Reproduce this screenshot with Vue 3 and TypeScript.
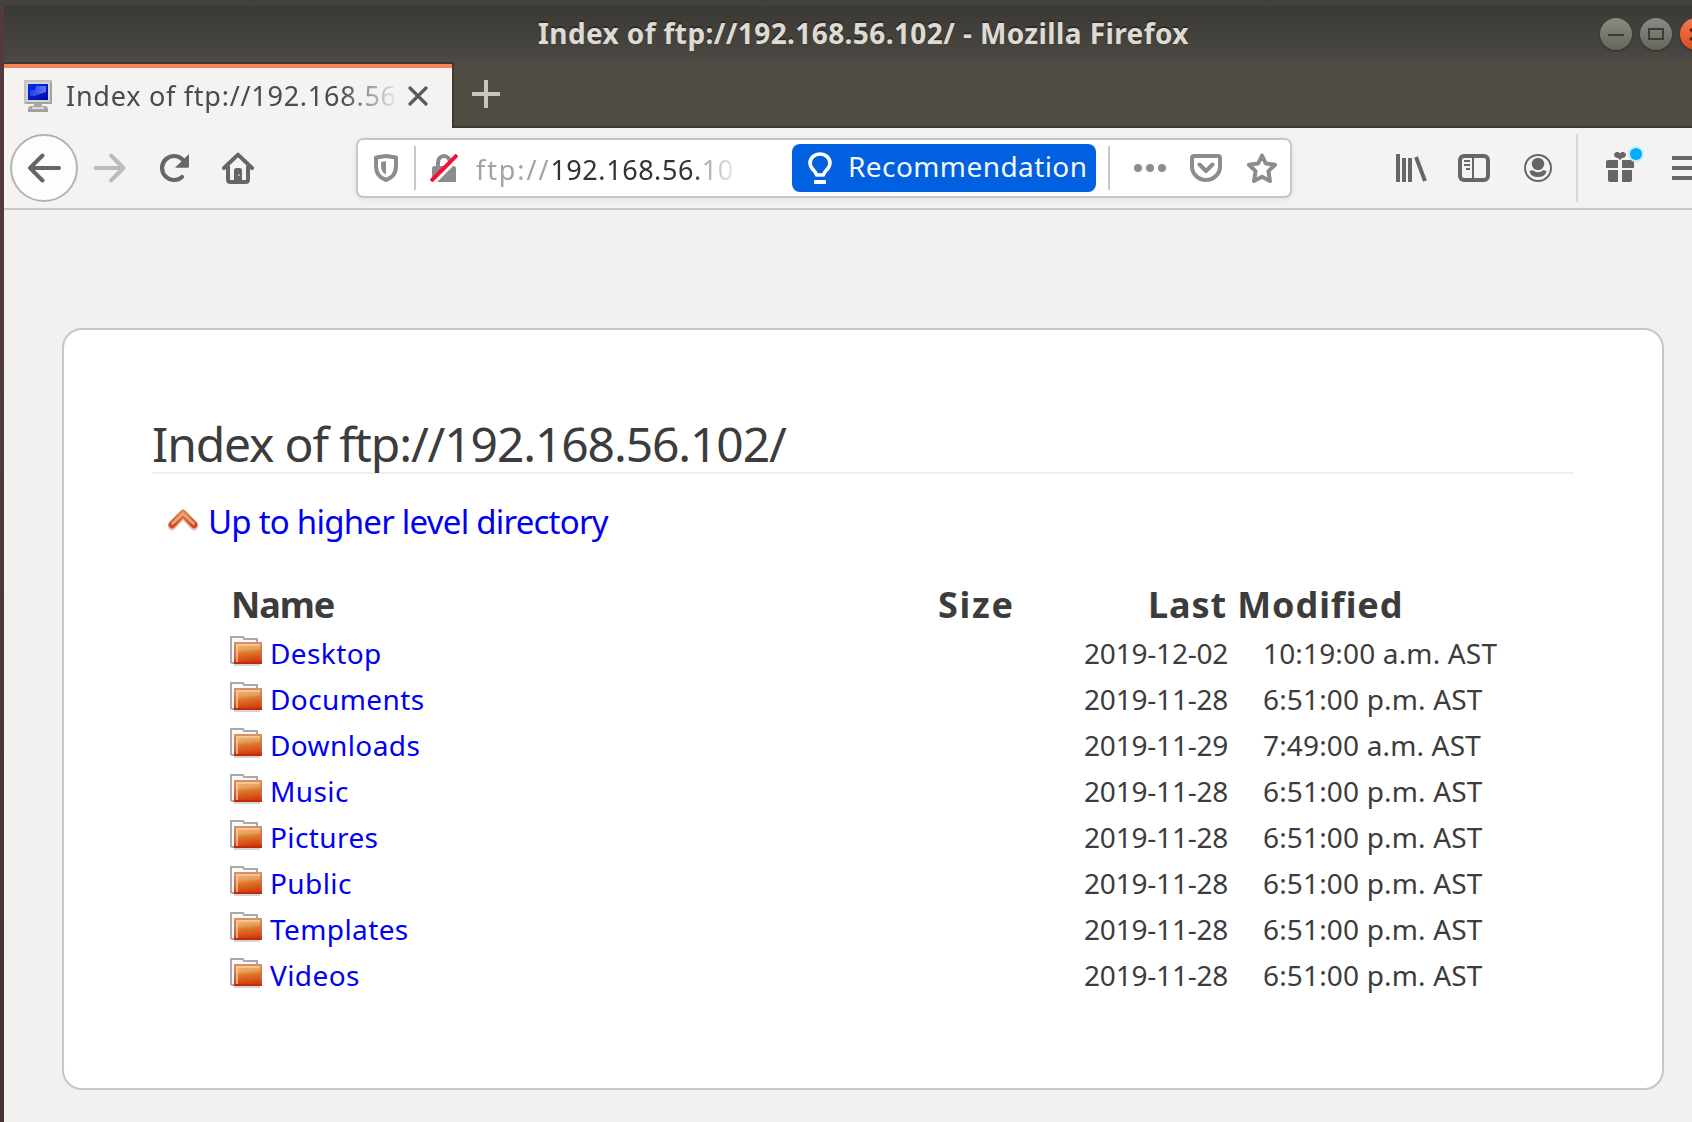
<script setup lang="ts">
interface Entry {
  name: string
  date: string
  time: string
}

const entries: Entry[] = [
  { name: 'Desktop', date: '2019-12-02', time: '10:19:00 a.m. AST' },
  { name: 'Documents', date: '2019-11-28', time: '6:51:00 p.m. AST' },
  { name: 'Downloads', date: '2019-11-29', time: '7:49:00 a.m. AST' },
  { name: 'Music', date: '2019-11-28', time: '6:51:00 p.m. AST' },
  { name: 'Pictures', date: '2019-11-28', time: '6:51:00 p.m. AST' },
  { name: 'Public', date: '2019-11-28', time: '6:51:00 p.m. AST' },
  { name: 'Templates', date: '2019-11-28', time: '6:51:00 p.m. AST' },
  { name: 'Videos', date: '2019-11-28', time: '6:51:00 p.m. AST' },
]
</script>

<template>
  <div class="screen">
    <svg class="defs" width="0" height="0" aria-hidden="true">
      <defs>
        <linearGradient id="folder" x1="0" y1="0" x2="0.15" y2="1">
          <stop offset="0" stop-color="#f0bd86" />
          <stop offset="0.4" stop-color="#e69c58" />
          <stop offset="0.52" stop-color="#de7c2c" />
          <stop offset="1" stop-color="#d23c10" />
        </linearGradient>
        <linearGradient id="folderEdge" x1="0" y1="0" x2="0" y2="1">
          <stop offset="0" stop-color="#dc8f64" />
          <stop offset="0.8" stop-color="#cc5a38" />
          <stop offset="1" stop-color="#bd2a0c" />
        </linearGradient>
        <linearGradient id="up" x1="0" y1="0" x2="0" y2="1">
          <stop offset="0" stop-color="#d88452" />
          <stop offset="1" stop-color="#cf4a20" />
        </linearGradient>
        <linearGradient id="crt" x1="0" y1="0" x2="1" y2="1">
          <stop offset="0" stop-color="#0a2af8" />
          <stop offset="1" stop-color="#0008a0" />
        </linearGradient>
        <linearGradient id="shine" x1="0" y1="0" x2="1" y2="0">
          <stop offset="0" stop-color="#2a4cf0" />
          <stop offset="1" stop-color="#8295fb" />
        </linearGradient>
      </defs>
    </svg>

    <div class="desktop-edge"></div>
    <div class="window">
      <header class="titlebar">
        <span class="title">Index of ftp://192.168.56.102/ - Mozilla Firefox</span>
        <div class="controls">
          <span class="ctl">
            <svg width="32" height="32" viewBox="0 0 32 32"><path d="M8 17h16" stroke="#3c3b37" stroke-width="2" /></svg>
          </span>
          <span class="ctl">
            <svg width="32" height="32" viewBox="0 0 32 32"><path d="M9 11h14v10H9z" fill="none" stroke="#3c3b37" stroke-width="2" /></svg>
          </span>
          <span class="ctl close">
            <svg width="32" height="32" viewBox="0 0 32 32"><path d="M10 11l12 11M22 11L10 22" stroke="#4a2418" stroke-width="2.6" /></svg>
          </span>
        </div>
      </header>

      <div class="tabstrip">
        <div class="tab">
          <svg class="favicon" width="28" height="32" viewBox="0 0 28 32">
            <path d="M0 0h28v24H0z" fill="#c3c3bf" />
            <path d="M2 2h26v22H2z" fill="#a3a39f" />
            <path d="M2 2h24v20H2z" fill="#d5d5d0" />
            <path d="M4 4h20v16H4z" fill="url(#crt)" />
            <path d="M12 6h10v6l-12 4H6v-6h5z" fill="url(#shine)" opacity="0.75" />
            <path d="M10 24h8v2h4l2 2v2h-20v-2l2-2h4z" fill="#a8a8a2" />
            <path d="M8 28h12" stroke="#d8d8d4" stroke-width="2" />
            <path d="M4 31h20" stroke="#a09f9a" stroke-width="2" />
          </svg>
          <span class="tab-label">Index of ftp://192.168.56</span>
          <svg class="tab-close" width="20" height="20" viewBox="0 0 20 20"><path d="M2 2l16 16M18 2L2 18" stroke="#5c5b59" stroke-width="3.2" stroke-linecap="round" /></svg>
        </div>
        <div class="newtab">
          <svg width="28" height="28" viewBox="0 0 28 28"><path d="M14 0v28M0 14h28" stroke="#c9c6bf" stroke-width="4" /></svg>
        </div>
      </div>

      <nav class="toolbar">
        <span class="back">
          <svg width="34" height="30" viewBox="0 0 34 30"><path d="M32 15H3M15.500 2.500L3 15l12.500 12.500" fill="none" stroke="#676664" stroke-width="4" stroke-linecap="round" stroke-linejoin="round" /></svg>
        </span>
        <svg class="forward" width="32" height="30" viewBox="0 0 32 30"><path d="M1 15h28M17 2.500L29.500 15 17 27.500" fill="none" stroke="#bdbcba" stroke-width="4" stroke-linecap="round" stroke-linejoin="round" /></svg>
        <svg class="reload" width="32" height="30" viewBox="0 0 32 30">
          <path d="M23 24A12 12 0 1 1 23.500 6.500" fill="none" stroke="#676664" stroke-width="4.200" stroke-linecap="round" />
          <path d="M30 1v12.200a1.500 1.500 0 0 1-1.500 1.500H16z" fill="#676664" />
        </svg>
        <svg class="home" width="32" height="32" viewBox="0 0 32 32">
          <path d="M2 16L16 2.600 30 16" fill="none" stroke="#676664" stroke-width="4" stroke-linecap="round" stroke-linejoin="round" />
          <path d="M6 14v13.500q0 2.500 2.500 2.500h15q2.500 0 2.500-2.500V14" fill="none" stroke="#676664" stroke-width="4" />
          <path d="M12 29V18.500q0-2.500 2.500-2.500h3q2.500 0 2.500 2.500V29z" fill="#676664" />
          <path d="M16 22h2v2h-2z" fill="#aaa9a7" />
        </svg>

        <div class="urlbar">
          <svg class="shield" width="24" height="28" viewBox="0 0 24 28">
            <path d="M12 2L22 3.500V12c0 7-4 12-10 14C6 24 2 19 2 12V3.500z" fill="none" stroke="#8c8c8b" stroke-width="4" stroke-linejoin="round" />
            <path d="M12 7v13.500C8.500 18.500 7 16 7 12V8z" fill="#8c8c8b" />
          </svg>
          <i class="sep"></i>
          <svg class="lock" width="28" height="28" viewBox="0 0 28 28">
            <path d="M8 14V8.500a6 6.500 0 0 1 12 0V14" fill="none" stroke="#8c8c8b" stroke-width="4" />
            <path d="M2 14.500q0-2.500 2.500-2.500h19q2.500 0 2.500 2.500V28H4.500Q2 28 2 25.500z" fill="#8c8c8b" />
            <path d="M3 30L31 2" stroke="#fff" stroke-width="3" />
            <path d="M1 27L27 1" stroke="#ff0a3c" stroke-width="3.800" />
          </svg>
          <span class="url"><span class="scheme">ftp://</span>192.168.56.<span class="rest">10</span></span>
          <span class="reco">
            <svg width="24" height="32" viewBox="0 0 24 32">
              <path d="M8.500 23c0-4-6.500-5.500-6.500-12a10 9 0 0 1 20 0c0 6.500-6.500 8-6.500 12z" fill="none" stroke="#fff" stroke-width="3.600" stroke-linejoin="round" />
              <path d="M6 30h12" stroke="#fff" stroke-width="4" />
            </svg>
            <span>Recommendation</span>
          </span>
          <i class="sep sep2"></i>
          <svg class="dots" width="32" height="8" viewBox="0 0 32 8"><g fill="#8c8c8b"><circle cx="4" cy="4" r="4" /><circle cx="16" cy="4" r="4" /><circle cx="28" cy="4" r="4" /></g></svg>
          <svg class="pocket" width="32" height="28" viewBox="0 0 32 28">
            <path d="M4 2h24q2 0 2 2v8.500a14 13.500 0 0 1-28 0V4q0-2 2-2z" fill="none" stroke="#8c8c8b" stroke-width="4" />
            <path d="M9.500 10.500L16 17l6.500-6.500" fill="none" stroke="#8c8c8b" stroke-width="4" stroke-linecap="round" stroke-linejoin="round" />
          </svg>
          <svg class="star" width="32" height="32" viewBox="0 0 32 32"><path d="M16 3.500l3.800 8 9.200 1.200-6.600 6.400 1.600 9.900-8-4.300-8 4.300 1.600-9.900L3 12.700l9.200-1.200z" fill="none" stroke="#8c8c8b" stroke-width="4" stroke-linejoin="round" /></svg>
        </div>

        <svg class="library" width="32" height="28" viewBox="0 0 32 28">
          <path d="M2 0v28M8 4v24M14 4v24" stroke="#676664" stroke-width="4" />
          <path d="M20 3l9 24" stroke="#676664" stroke-width="4" />
        </svg>
        <svg class="sidebar" width="32" height="28" viewBox="0 0 32 28">
          <rect x="2" y="2" width="28" height="24" rx="4" fill="none" stroke="#676664" stroke-width="4" />
          <path d="M15 3v22M6 7h6M6 11h6M8 15h4" stroke="#676664" stroke-width="2" />
        </svg>
        <svg class="account" width="28" height="28" viewBox="0 0 28 28">
          <circle cx="14" cy="14" r="13" fill="none" stroke="#676664" stroke-width="2" />
          <circle cx="14" cy="10" r="6.200" fill="#676664" />
          <path d="M5.500 17q3.500-1.500 4.500 0 4 2.500 8 0 1-1.500 4.500 0-1 6-8.500 6t-8.500-6z" fill="#676664" />
        </svg>
        <i class="tsep"></i>
        <span class="gift">
          <svg width="28" height="30" viewBox="0 0 28 30"><path d="M0 10q0-2 2-2h10v8H0zM16 8h10q2 0 2 2v6H16zM2 18h10v12H4q-2 0-2-2zM16 18h10v10q0 2-2 2h-8zM8 2q3-4 6-.5Q17-2 20 2q0 4-4 4l-2 2-2-2q-4 0-4-4z" fill="#676664" /></svg>
          <i class="badge"></i>
        </span>
        <svg class="menu" width="28" height="24" viewBox="0 0 28 24"><path d="M0 2h28M0 12h28M0 22h28" stroke="#676664" stroke-width="4" /></svg>
      </nav>

      <main class="page">
        <section class="card">
          <h1>Index of ftp://192.168.56.102/</h1>
          <p class="up">
            <svg width="30" height="22" viewBox="0 0 30 22">
              <path d="M4 17.500L15 5.500l11 12" fill="none" stroke="#e7b49c" stroke-width="7.500" stroke-linecap="round" stroke-linejoin="round" />
              <path d="M4 15.500L15 4.200l11 11.300" fill="none" stroke="url(#up)" stroke-width="7" stroke-linecap="round" stroke-linejoin="round" />
              <path d="M4.500 14.500L15 4.500l10.500 10" fill="none" stroke="#eba26c" stroke-width="2.600" stroke-linecap="round" stroke-linejoin="round" />
            </svg>
            <a>Up to higher level directory</a>
          </p>
          <div class="listing">
            <div class="row head">
              <span class="h-name">Name</span>
              <span class="h-size">Size</span>
              <span class="h-mod">Last Modified</span>
            </div>
            <div v-for="e in entries" :key="e.name" class="row">
              <span class="name">
                <svg width="32" height="30" viewBox="0 0 32 30">
                  <path d="M1 27V1h12l1 2h13v4" fill="#fafafa" stroke="#a9a9a9" stroke-width="2" />
                  <path d="M1 27h4" stroke="#a9a9a9" stroke-width="2" />
                  <path d="M4 29h26" stroke="#d4d4d4" stroke-width="2" />
                  <rect x="5" y="7" width="26" height="20" fill="url(#folder)" stroke="url(#folderEdge)" stroke-width="2" />
                  <path d="M7 26V9h23" fill="none" stroke="#f6cf9f" stroke-width="2" opacity="0.7" />
                  <path d="M4 27h28" stroke="#bd2a0c" stroke-width="2" />
                </svg>
                <a>{{ e.name }}</a>
              </span>
              <span class="date">{{ e.date }}</span>
              <span class="time">{{ e.time }}</span>
            </div>
          </div>
        </section>
      </main>
    </div>
  </div>
</template>

<style>
body {
  margin: 0;
  overflow: hidden;
}
</style>

<style scoped>
.screen {
  display: flex;
  box-sizing: border-box;
  width: 1692px;
  height: 1122px;
  padding-top: 6px;
  overflow: hidden;
  background: #43413b;
  font-family: "Noto Sans", "Open Sans", sans-serif;
  color: #3c3c3c;
}
.screen svg {
  display: block;
  flex: none;
}
.defs {
  position: absolute;
}
.desktop-edge {
  flex: none;
  width: 4px;
  background: linear-gradient(#533a3c, #50393c 40%, #46302f);
}
.window {
  flex: none;
  width: 1688px;
  display: flex;
  flex-direction: column;
  overflow: hidden;
  background: #f2f1ef;
}

/* title bar */
.titlebar {
  display: flex;
  flex: none;
  height: 54px;
  background: linear-gradient(#3a3934, #4a4842);
}
.title {
  flex: none;
  width: 654px;
  margin-left: 534px;
  line-height: 54px;
  font-size: 28px;
  font-weight: 700;
  letter-spacing: 0.4px;
  white-space: nowrap;
  color: #dfdbd2;
  text-shadow: 0 -2px 0 #2d2c28;
}
.controls {
  display: flex;
  flex: none;
  gap: 8px;
  margin: 12px 0 0 408px;
}
.ctl {
  flex: none;
  width: 32px;
  height: 32px;
  border-radius: 50%;
  background: linear-gradient(#8b8a82, #66655e);
  box-shadow: 0 1px 0 1px #3b3a35;
}
.ctl.close {
  background: linear-gradient(#f37a54, #de4a19);
}

/* tabs */
.tabstrip {
  display: flex;
  flex: none;
  height: 68px;
  background: #504c44;
}
.tab {
  display: flex;
  box-sizing: border-box;
  width: 450px;
  height: 66px;
  margin-top: 2px;
  padding: 10px 0 0 20px;
  border-right: 2px solid #3a3833;
  background: linear-gradient(#3a3833 2px, #f5835a 2px, #f5835a 6px, #f4f3f1 6px);
}
.favicon {
  margin-top: 8px;
}
.tab-label {
  width: 334px;
  margin: -4px 0 0 14px;
  line-height: 55px;
  font-size: 27px;
  letter-spacing: 0.75px;
  white-space: nowrap;
  color: #4c4b49;
  -webkit-mask-image: linear-gradient(to right, #000 275px, transparent 334px);
  mask-image: linear-gradient(to right, #000 275px, transparent 334px);
}
.tab-close {
  margin: 14px 0 0 8px;
}
.newtab {
  flex: 1;
  padding: 20px 0 0 18px;
  border-bottom: 2px solid #3a3833;
}

/* navigation */
.toolbar {
  display: flex;
  flex: none;
  box-sizing: border-box;
  align-items: center;
  height: 82px;
  padding: 0 0 0 6px;
  border-bottom: 2px solid #c8c6c4;
  background: #f4f3f1;
}
.back {
  display: flex;
  flex: none;
  box-sizing: border-box;
  align-items: center;
  justify-content: center;
  width: 68px;
  height: 68px;
  border: 2px solid #b4b3b1;
  border-radius: 50%;
  background: #fdfdfd;
}
.forward {
  margin-left: 16px;
}
.reload {
  margin-left: 33px;
}
.home {
  margin-left: 31px;
}
.urlbar {
  display: flex;
  flex: none;
  box-sizing: border-box;
  align-items: center;
  width: 936px;
  height: 60px;
  margin-left: 102px;
  padding-left: 16px;
  border: 2px solid #c8c5c2;
  border-radius: 7px;
  background: #fff;
  box-shadow: 0 2px 7px rgba(0, 0, 0, 0.07);
}
.sep {
  flex: none;
  width: 2px;
  height: 44px;
  margin-left: 16px;
  background: #cac7c4;
}
.lock {
  margin-left: 14px;
}
.url {
  flex: none;
  width: 262px;
  margin-left: 18px;
  padding-top: 3px;
  font-size: 27px;
  letter-spacing: 0.55px;
  line-height: 53px;
  white-space: nowrap;
  color: #333;
  -webkit-mask-image: linear-gradient(to right, #000 215px, transparent 268px);
  mask-image: linear-gradient(to right, #000 215px, transparent 268px);
}
.scheme {
  letter-spacing: 1.9px;
  color: #a3a3a3;
}
.rest {
  color: #8c8c8c;
}
.reco {
  display: flex;
  flex: none;
  box-sizing: border-box;
  align-items: center;
  width: 304px;
  height: 48px;
  margin-left: 54px;
  padding-left: 16px;
  border-radius: 8px;
  background: #0060e0;
  color: #f4f8ff;
}
.reco span {
  margin-left: 16px;
  padding-bottom: 3px;
  font-size: 28px;
  letter-spacing: 0.42px;
  line-height: 45px;
}
.sep2 {
  margin-left: 12px;
}
.dots {
  margin-left: 24px;
}
.pocket {
  margin-left: 24px;
}
.star {
  margin-left: 24px;
}
.library {
  margin-left: 104px;
}
.sidebar {
  margin-left: 30px;
}
.account {
  margin-left: 34px;
}
.tsep {
  flex: none;
  width: 2px;
  height: 68px;
  margin-left: 24px;
  background: #d9d8d6;
}
.gift {
  position: relative;
  flex: none;
  margin-left: 28px;
  padding-bottom: 2px;
}
.badge {
  position: absolute;
  left: 24px;
  top: -4px;
  width: 12px;
  height: 12px;
  border-radius: 50%;
  background: #00adfb;
  box-shadow: 0 0 0 2px #c4ecfb;
}
.menu {
  margin-left: 38px;
}

/* listing */
.page {
  padding: 118px 0 0 58px;
}
.card {
  box-sizing: border-box;
  width: 1602px;
  height: 762px;
  padding: 83px 88px 0;
  border: 2px solid #c8c6c4;
  border-radius: 20px;
  background: #fff;
}
h1 {
  box-sizing: border-box;
  height: 61px;
  margin: 0;
  border-bottom: 2px solid #f0f0f0;
  font-size: 48px;
  font-weight: 400;
  letter-spacing: -1.14px;
  line-height: 62px;
  white-space: nowrap;
}
.up {
  display: flex;
  margin: 24px 0 0;
  padding-left: 16px;
  height: 46px;
  font-size: 33px;
  letter-spacing: -0.77px;
  line-height: 48px;
}
.up svg {
  margin-top: 11px;
}
.up a {
  margin-left: 10px;
}
a {
  color: #0000f4;
}
.listing {
  margin: 37px 0 0 78px;
}
.row {
  display: grid;
  grid-template-columns: 854px 178px 300px;
  height: 46px;
  font-size: 28px;
  line-height: 46px;
  white-space: nowrap;
}
.row.head {
  grid-template-columns: 708px 210px 300px;
  height: 49px;
  font-size: 36px;
  font-weight: 700;
  line-height: 48px;
}
.h-name {
  margin-left: 1px;
  letter-spacing: -1.1px;
}
.h-size {
  letter-spacing: 1.7px;
}
.h-mod {
  letter-spacing: 0.9px;
}
.name {
  display: flex;
}
.name svg {
  margin-top: 6px;
}
.name a {
  margin-left: 8px;
  letter-spacing: 0.4px;
}
.date {
  letter-spacing: -0.2px;
}
.time {
  margin-left: 1px;
  letter-spacing: 0.16px;
}
</style>
